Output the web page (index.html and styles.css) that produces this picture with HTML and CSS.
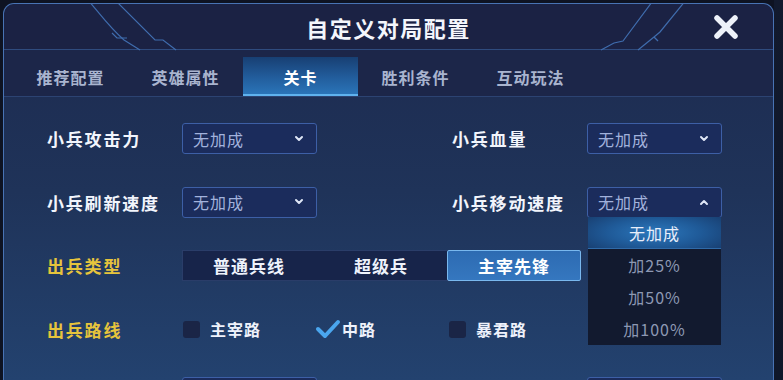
FILE: index.html
```html
<!DOCTYPE html>
<html lang="zh">
<head>
<meta charset="utf-8">
<title>自定义对局配置</title>
<link rel="stylesheet" href="styles.css">
</head>
<body>
<div class="screen">
  <div class="panel">
    <svg class="deco" width="783" height="54" viewBox="0 0 783 54">
      <path d="M88 0 C100 14 110 28 124 40 L140 50" />
      <path d="M112 33 L117 38 L127 38" />
      <path d="M115 0 L155 40 L163 40 L176 50" />
      <path d="M686 0 L660 32 L654 37 L638 50" />
      <path d="M654 37 L658 41" />
      <path d="M652 2 L623 41 L614 43 L601 50" />
    </svg>
    <header class="header">
      <span></span>
      <h1 class="title">自定义对局配置</h1>
      <button class="close" aria-label="关闭">
        <svg width="28" height="28" viewBox="0 0 28 28"><path d="M5 5 L23 23 M23 5 L5 23" /></svg>
      </button>
    </header>
    <nav class="tabs">
      <div class="tab">推荐配置</div>
      <div class="tab">英雄属性</div>
      <div class="tab active">关卡</div>
      <div class="tab">胜利条件</div>
      <div class="tab">互动玩法</div>
    </nav>
    <main class="content">
      <div class="row">
        <div class="field">
          <span class="label">小兵攻击力</span>
          <div class="select">无加成<svg class="chev" width="10" height="8" viewBox="0 0 10 8"><path d="M2 2 L5 5 L8 2" /></svg></div>
        </div>
        <div class="field">
          <span class="label">小兵血量</span>
          <div class="select">无加成<svg class="chev" width="10" height="8" viewBox="0 0 10 8"><path d="M2 2 L5 5 L8 2" /></svg></div>
        </div>
      </div>
      <div class="row">
        <div class="field">
          <span class="label">小兵刷新速度</span>
          <div class="select">无加成<svg class="chev" width="10" height="8" viewBox="0 0 10 8"><path d="M2 2 L5 5 L8 2" /></svg></div>
        </div>
        <div class="field">
          <span class="label">小兵移动速度</span>
          <div class="select open">无加成<svg class="chev" width="10" height="8" viewBox="0 0 10 8"><path d="M2 6 L5 3 L8 6" /></svg>
            <ul class="dropdown">
              <li class="item active">无加成</li>
              <li class="item">加25%</li>
              <li class="item">加50%</li>
              <li class="item">加100%</li>
            </ul>
          </div>
        </div>
      </div>
      <div class="row">
        <span class="label gold">出兵类型</span>
        <div class="segmented">
          <div class="seg">普通兵线</div>
          <div class="seg">超级兵</div>
          <div class="seg active">主宰先锋</div>
        </div>
      </div>
      <div class="row">
        <span class="label gold">出兵路线</span>
        <div class="options">
          <div class="option"><span class="box"></span>主宰路</div>
          <div class="option checked"><svg class="check" width="26" height="20" viewBox="0 0 26 20"><path d="M3 10 L10 17 L23 3" /></svg>中路</div>
          <div class="option"><span class="box"></span>暴君路</div>
        </div>
      </div>
      <div class="row">
        <div class="field">
          <span class="label"></span>
          <div class="select"></div>
        </div>
        <div class="field">
          <span class="label"></span>
          <div class="select"></div>
        </div>
      </div>
    </main>
  </div>
  <div class="side"></div>
</div>
</body>
</html>
```

FILE: styles.css
```css
* { box-sizing: border-box; }

body {
  margin: 0;
  width: 783px;
  height: 380px;
  overflow: hidden;
  background: #0e1322;
  font-family: "Noto Sans CJK SC", "Noto Sans", sans-serif;
  color: #eef2fb;
}

.screen {
  display: flex;
  height: 380px;
  overflow: hidden;
}

.panel {
  position: relative;
  flex: none;
  width: 771px;
  height: 377px;
  margin: 3px 0 0 3px;
  border: 1px solid #4873b4;
  border-bottom: none;
  border-radius: 11px 11px 0 0;
  background: linear-gradient(180deg, #1d2a4f 0%, #1f3359 50%, #23426f 100%);
  display: flex;
  flex-direction: column;
  overflow: hidden;
}

.deco {
  position: absolute;
  left: -4px;
  top: -4px;
  fill: none;
  stroke: #3f6cad;
  stroke-width: 1.2;
  pointer-events: none;
  z-index: 1;
}

.side {
  flex: 1;
  background: linear-gradient(180deg, #121a2e, #0f1729);
}

.header {
  flex: none;
  height: 46px;
  display: grid;
  grid-template-columns: 1fr auto 1fr;
  align-items: center;
  background: #1b2244;
  border-bottom: 1px solid #2f4b7e;
  border-radius: 10px 10px 0 0;
}

.title {
  margin: 0;
  font-size: 22px;
  font-weight: 700;
  letter-spacing: 1.5px;
  color: #f4f6fc;
  line-height: 46px;
  position: relative;
  z-index: 2;
}

.close {
  justify-self: end;
  margin-right: 33px;
  width: 28px;
  height: 28px;
  padding: 0;
  border: none;
  background: none;
  display: flex;
}

.close path {
  fill: none;
  stroke: #eef2fa;
  stroke-width: 5.5;
  stroke-linecap: round;
}

.tabs {
  flex: none;
  height: 47px;
  display: flex;
  align-items: flex-end;
  padding-left: 9px;
  background: #1c2649;
  border-bottom: 1px solid #2c4372;
}

.tab {
  flex: none;
  width: 115px;
  height: 39px;
  display: flex;
  align-items: center;
  justify-content: center;
  font-size: 16px;
  font-weight: 700;
  letter-spacing: 1px;
  color: #a9b4cf;
}

.tab.active {
  color: #ffffff;
  background: linear-gradient(180deg, #183f73 0%, #225d9c 55%, #2a74b8 100%);
  border-bottom: 2px solid #5fb2ee;
  padding-top: 2px;
}

.content {
  flex: none;
  padding: 10px 0 0 43px;
}

.row {
  height: 63.5px;
  display: flex;
  align-items: center;
}

.field {
  flex: none;
  width: 405px;
  display: flex;
  align-items: center;
}

.field + .field {
  width: auto;
}

.label {
  width: 135px;
  flex: none;
  font-size: 17px;
  font-weight: 700;
  letter-spacing: 1.8px;
  color: #f2f5fc;
}

.label.gold {
  color: #e6c43c;
}

.select {
  position: relative;
  flex: none;
  width: 135px;
  height: 31px;
  display: flex;
  align-items: center;
  justify-content: space-between;
  padding: 0 12px 0 10px;
  border: 1.5px solid #3d5fa6;
  border-radius: 3px;
  background: #1b2c5c;
  font-size: 16px;
  letter-spacing: 1px;
  color: #a2b2dc;
}

.chev {
  fill: none;
  stroke: #dfe6f6;
  stroke-width: 2;
  stroke-linecap: round;
  stroke-linejoin: round;
}

.dropdown {
  position: absolute;
  top: 29.5px;
  left: 0;
  width: 133px;
  margin: 0;
  padding: 0;
  list-style: none;
  background: #121a2f;
  z-index: 3;
}

.item {
  height: 32px;
  display: flex;
  align-items: center;
  justify-content: center;
  font-size: 16px;
  color: #8d98b3;
}

.item.active {
  color: #e8eefa;
  background: radial-gradient(ellipse 70% 90% at 50% 50%, #2c78bd 0%, #1f5a98 50%, #173a6a 100%);
  border-bottom: 1.5px solid #2f6aa8;
}

.segmented {
  flex: none;
  width: 399px;
  height: 31px;
  display: flex;
  border: 1px solid #2a3d69;
  background: #17244a;
}

.seg {
  flex: 1;
  display: flex;
  align-items: center;
  justify-content: center;
  font-size: 17px;
  font-weight: 700;
  letter-spacing: 1px;
  color: #eef2fb;
}

.seg.active {
  margin: -1px -1px -1px 0;
  background: linear-gradient(180deg, #2d6bb2, #3577bf);
  border: 1.5px solid #79b8ee;
  border-radius: 2px;
  color: #ffffff;
}

.options {
  display: flex;
}

.option {
  flex: none;
  width: 133px;
  display: flex;
  align-items: center;
  font-size: 16px;
  font-weight: 700;
  letter-spacing: 1px;
  color: #eef2fb;
}

.box {
  width: 17px;
  height: 17px;
  margin: 0 10px 0 1px;
  border-radius: 3px;
  background: #1a2546;
}

.check {
  margin: 0 1px 0 0;
  fill: none;
  stroke: #4aa6ee;
  stroke-width: 4;
  stroke-linecap: round;
  stroke-linejoin: round;
}
```
